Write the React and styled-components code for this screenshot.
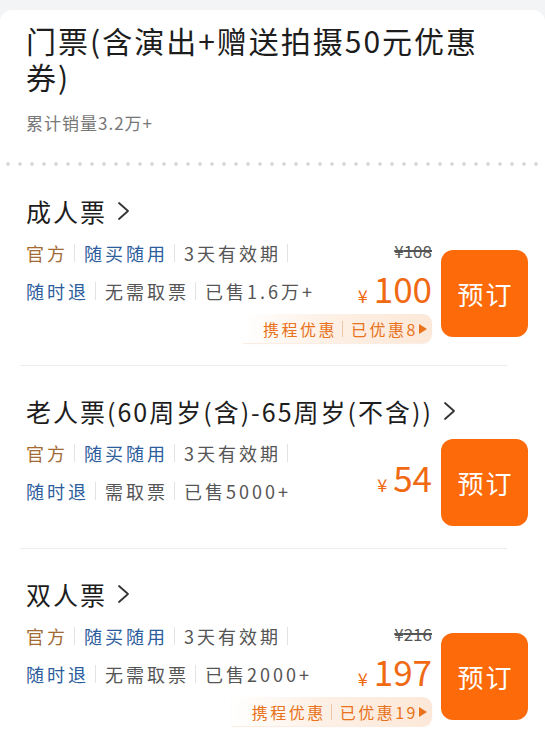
import React from "react";
import styled, { createGlobalStyle } from "styled-components";

const GlobalStyle = createGlobalStyle`
  html, body {
    margin: 0;
    padding: 0;
    background: #f3f4f6;
    font-family: "Noto Sans CJK SC", "Noto Sans", sans-serif;
  }
`;

const Page = styled.div`
  padding-top: 10px;
  background: #f3f4f6;
  min-height: 749px;
  box-sizing: border-box;
`;

const Sheet = styled.div`
  background: #ffffff;
  border-radius: 12px 12px 0 0;
  min-height: 739px;
  overflow: hidden;
`;

const Header = styled.div`
  padding: 12px 50px 0 26px;
`;

const Title = styled.h1`
  margin: 0;
  font-size: 30px;
  line-height: 36px;
  font-weight: 400;
  letter-spacing: 2px;
  color: #1d1d1d;
`;

const Sales = styled.div`
  margin-top: 17px;
  font-size: 17px;
  line-height: 24px;
  letter-spacing: 1px;
  color: #777777;
`;

const Dots = styled.div`
  margin-top: 27px;
  height: 4px;
  background-image: radial-gradient(circle, #d6d6d6 1.5px, transparent 1.9px);
  background-size: 12px 4px;
  background-position: 2px 0;
`;

const Card = styled.div`
  padding: 29px 17px 22px 26px;
`;

const Divider = styled.div`
  height: 1px;
  margin: 0 38px 0 20px;
  background: #ececec;
`;

const CardTitle = styled.div`
  display: flex;
  align-items: center;
  font-size: 25px;
  line-height: 32px;
  letter-spacing: 2px;
  color: #1d1d1d;

  svg {
    margin-left: 10px;
    flex-shrink: 0;
  }
`;

const Body = styled.div`
  display: grid;
  grid-template-columns: 1fr auto 87px;
  grid-template-rows: 38px 38px auto;
  column-gap: 9px;
  margin-top: 7px;
`;

const TagRow = styled.div`
  grid-column: 1;
  grid-row: ${(p) => p.$row};
  display: flex;
  align-items: center;
  font-size: 18px;
  letter-spacing: 3px;
  white-space: nowrap;
`;

const toneColor = {
  brown: "#a36b34",
  blue: "#2d5d9c",
  gray: "#555555",
};

const Tag = styled.span`
  color: ${(p) => toneColor[p.$tone] || toneColor.gray};
`;

const TagSep = styled.span`
  width: 1px;
  height: 18px;
  margin: 0 9px 0 6px;
  background: #e3e3e3;
`;

const OldPrice = styled.div`
  grid-column: 2;
  grid-row: 1;
  align-self: start;
  justify-self: end;
  margin-top: 6px;
  font-size: 17px;
  line-height: 22px;
  color: #555555;
  text-decoration: line-through;
  text-decoration-thickness: 1.5px;
`;

const Price = styled.div`
  grid-column: 2;
  grid-row: ${(p) => (p.$solo ? "1 / 3" : "2")};
  align-self: ${(p) => (p.$solo ? "end" : "center")};
  margin-bottom: ${(p) => (p.$solo ? "7px" : "0")};
  justify-self: end;
  display: flex;
  align-items: baseline;
  line-height: 38px;
  color: #f06a14;
`;

const Yen = styled.span`
  font-size: 18px;
  margin-right: 6px;
`;

const Amount = styled.span`
  font-size: 35px;
`;

const Promo = styled.div`
  grid-column: 1 / 3;
  grid-row: 3;
  justify-self: end;
  margin-top: 4px;
  display: flex;
  align-items: center;
  height: 29px;
  padding: 0 4px 0 20px;
  border-radius: 0 9px 9px 0;
  background: linear-gradient(90deg, rgba(253, 236, 222, 0) 0%, #fdf0e5 45%, #fce8d8 100%);
  box-shadow: 0 1px 1px rgba(240, 200, 170, 0.35);
  font-size: 16px;
  letter-spacing: 2.5px;
  color: #e8731c;
  white-space: nowrap;
`;

const PromoSep = styled.span`
  width: 1px;
  height: 16px;
  margin: 0 8px 0 5px;
  background: #efc6a4;
`;

const BookButton = styled.button`
  grid-column: 3;
  grid-row: 1 / 4;
  align-self: start;
  width: 87px;
  height: 87px;
  margin-top: ${(p) => (p.$compact ? "5px" : "16px")};
  border: none;
  border-radius: 12px;
  background: #fc6a0a;
  color: #ffffff;
  font-family: inherit;
  font-size: 26px;
  letter-spacing: 2px;
  padding: 0 0 0 2px;
  cursor: pointer;
`;

const Chevron = () => (
  <svg width="13" height="20" viewBox="0 0 13 20">
    <polyline
      points="2,2 11,10 2,18"
      fill="none"
      stroke="#333"
      strokeWidth="1.8"
      strokeLinecap="round"
      strokeLinejoin="round"
    />
  </svg>
);

const Triangle = () => (
  <svg width="10" height="12" viewBox="0 0 10 12">
    <path d="M1 1 L9 6 L1 11 Z" fill="#e8731c" />
  </svg>
);

const tickets = [
  {
    name: "成人票",
    rows: [
      { tags: [["官方", "brown"], ["随买随用", "blue"], ["3天有效期", "gray"]], trailing: true },
      { tags: [["随时退", "blue"], ["无需取票", "gray"], ["已售1.6万+", "gray"]] },
    ],
    old: "108",
    price: "100",
    saved: "8",
  },
  {
    name: "老人票(60周岁(含)-65周岁(不含))",
    rows: [
      { tags: [["官方", "brown"], ["随买随用", "blue"], ["3天有效期", "gray"]], trailing: true },
      { tags: [["随时退", "blue"], ["需取票", "gray"], ["已售5000+", "gray"]] },
    ],
    price: "54",
  },
  {
    name: "双人票",
    rows: [
      { tags: [["官方", "brown"], ["随买随用", "blue"], ["3天有效期", "gray"]], trailing: true },
      { tags: [["随时退", "blue"], ["无需取票", "gray"], ["已售2000+", "gray"]] },
    ],
    old: "216",
    price: "197",
    saved: "19",
  },
];

const TicketCard = ({ t }) => (
  <Card>
    <CardTitle>
      {t.name}
      <Chevron />
    </CardTitle>
    <Body>
      {t.rows.map((row, i) => (
        <TagRow key={i} $row={i + 1}>
          {row.tags.map(([text, tone], j) => (
            <React.Fragment key={j}>
              {j > 0 && <TagSep />}
              <Tag $tone={tone}>{text}</Tag>
            </React.Fragment>
          ))}
          {row.trailing && <TagSep />}
        </TagRow>
      ))}
      {t.old && <OldPrice>¥{t.old}</OldPrice>}
      <Price $solo={!t.old}>
        <Yen>¥</Yen>
        <Amount>{t.price}</Amount>
      </Price>
      {t.saved && (
        <Promo>
          携程优惠
          <PromoSep />
          已优惠{t.saved}
          <Triangle />
        </Promo>
      )}
      <BookButton $compact={!t.saved}>预订</BookButton>
    </Body>
  </Card>
);

export default function App() {
  return (
    <Page>
      <GlobalStyle />
      <Sheet>
        <Header>
          <Title>门票(含演出+赠送拍摄50元优惠券)</Title>
          <Sales>累计销量3.2万+</Sales>
        </Header>
        <Dots />
        {tickets.map((t, i) => (
          <React.Fragment key={t.name}>
            {i > 0 && <Divider />}
            <TicketCard t={t} />
          </React.Fragment>
        ))}
      </Sheet>
    </Page>
  );
}
